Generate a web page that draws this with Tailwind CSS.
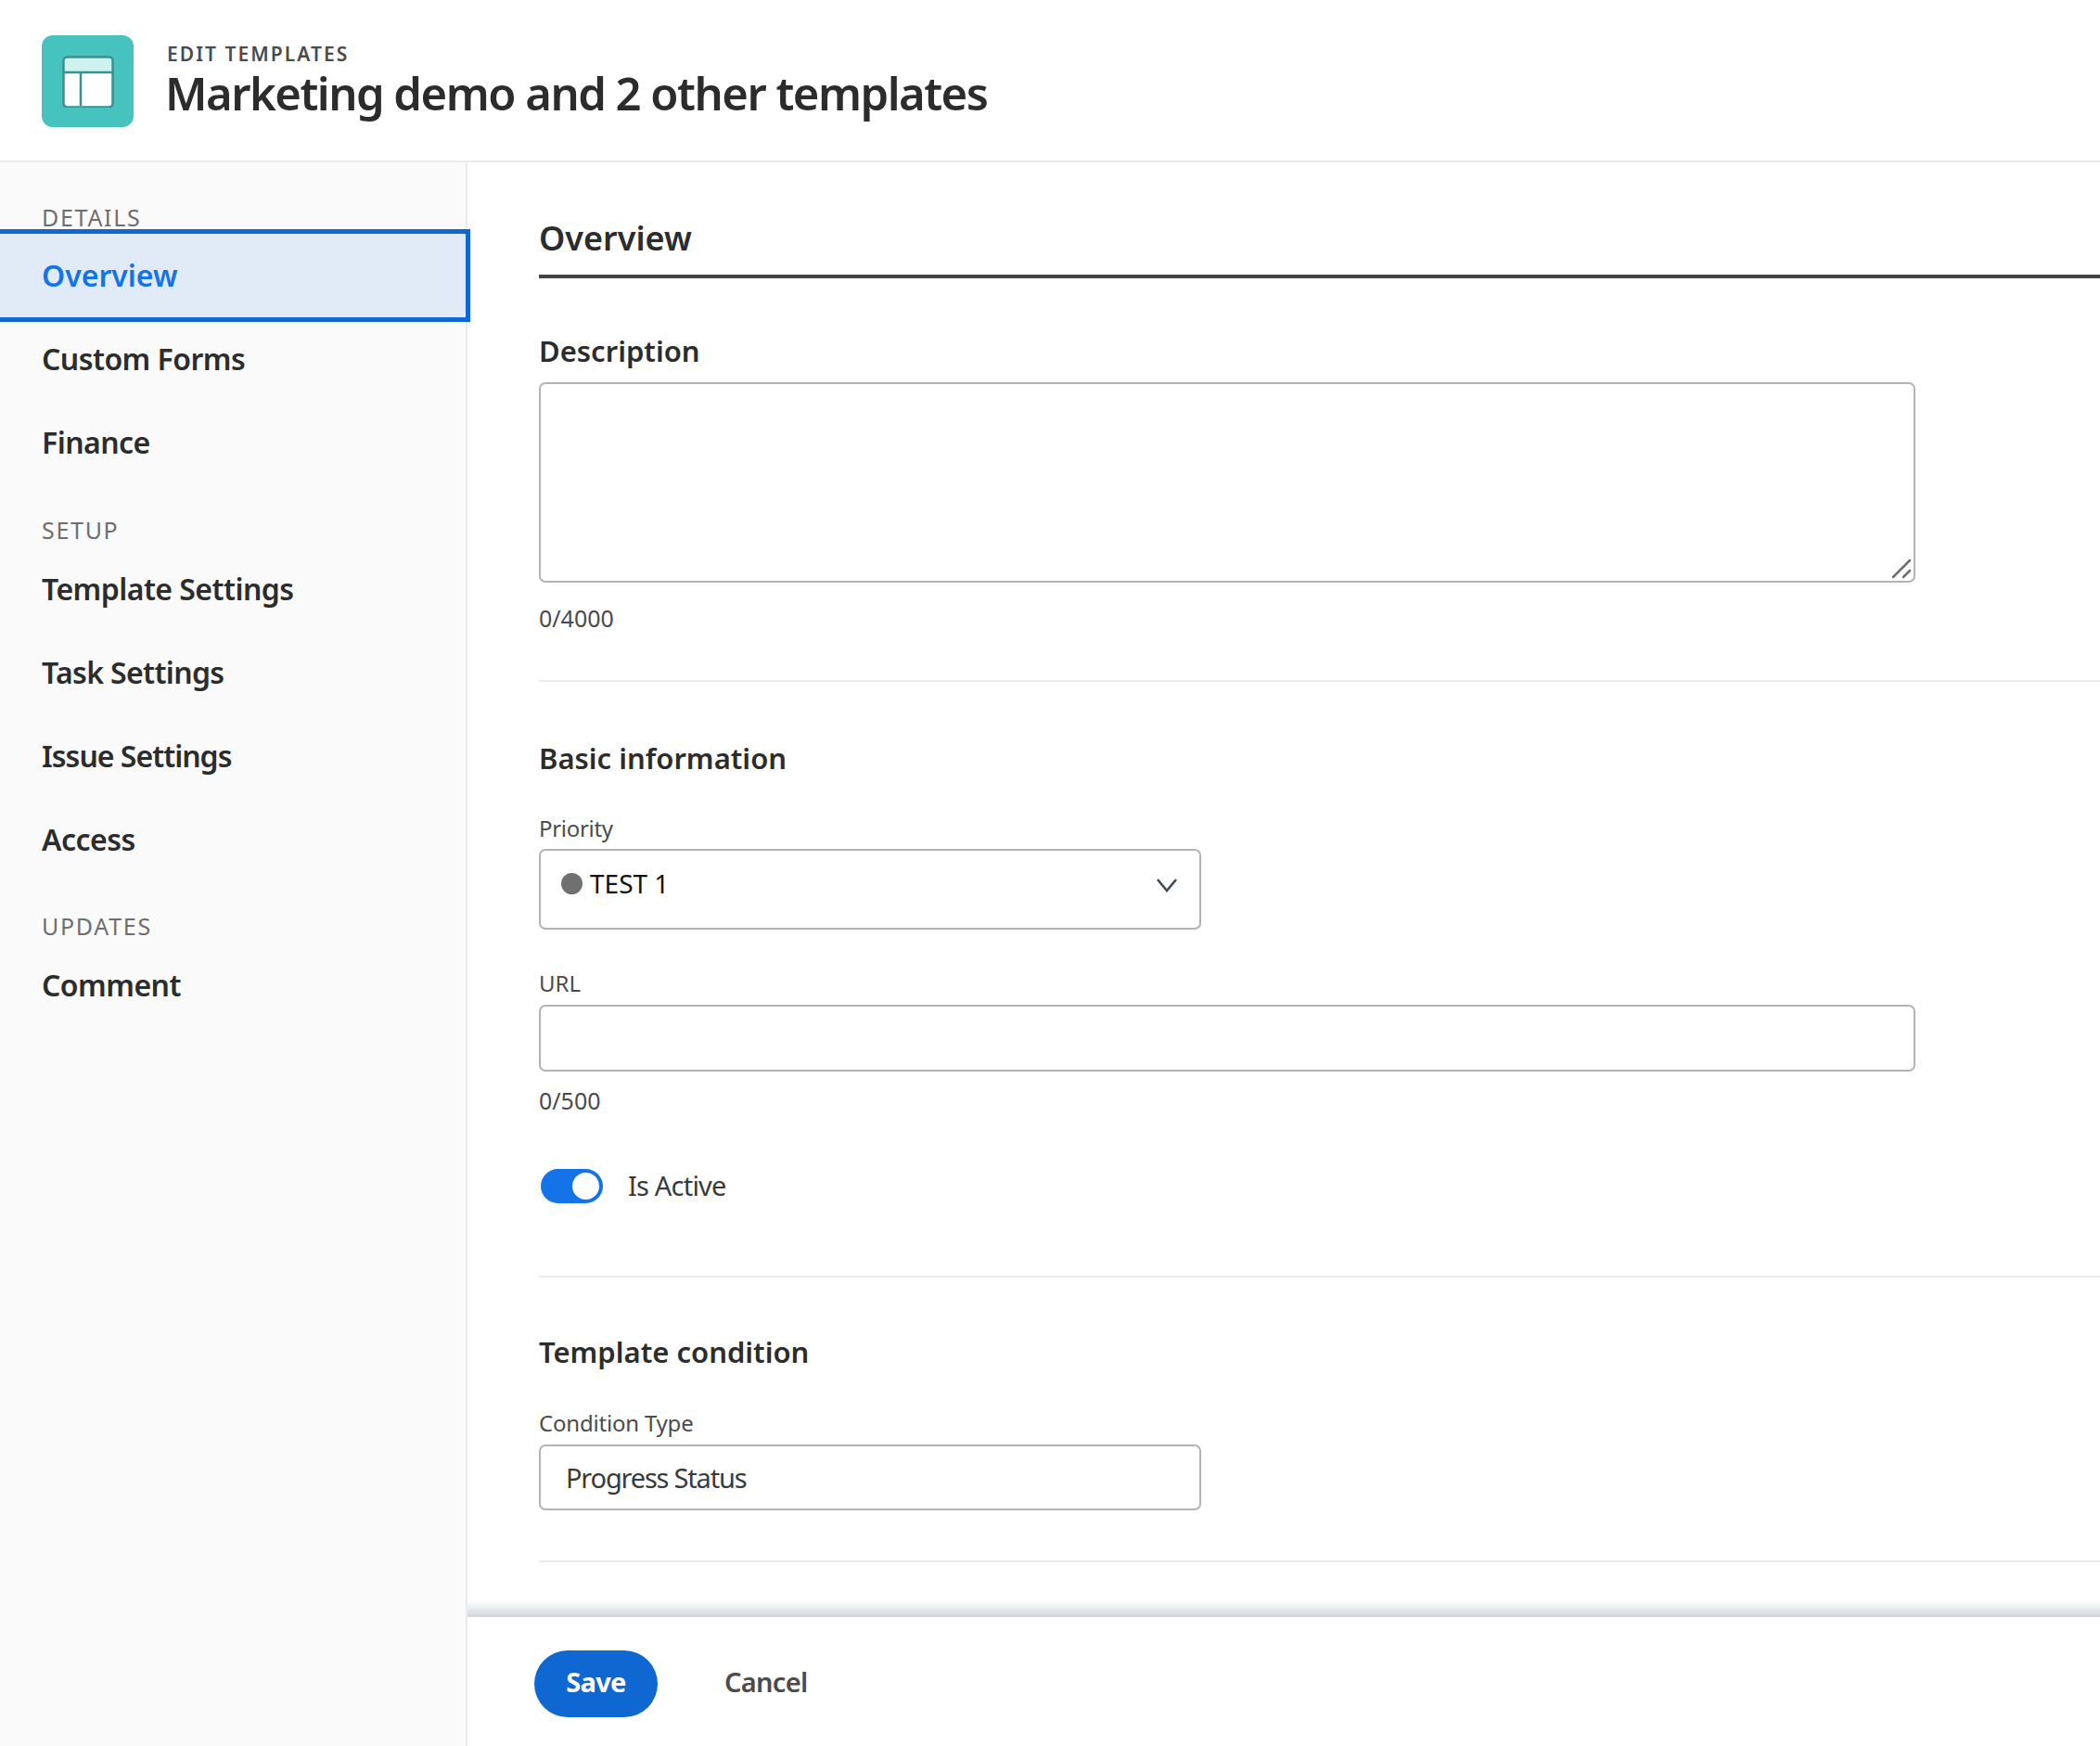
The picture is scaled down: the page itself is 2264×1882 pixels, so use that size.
<!DOCTYPE html>
<html lang="en">
<head>
  <meta charset="UTF-8">
  <meta name="viewport" content="width=device-width, initial-scale=1.0">
  <title>Edit Templates</title>
  <script src="https://cdn.jsdelivr.net/npm/@tailwindcss/browser@4"></script>
</head>
<body class="bg-white h-[1882px] overflow-hidden flex flex-col font-['Noto_Sans',sans-serif] text-[#2c2c2c]">
  <!-- header -->
  <header class="h-[175px] shrink-0 border-b-2 border-[#ebebeb] flex items-start pl-[45px] pt-[38px]">
    <div class="w-[99px] h-[99px] rounded-xl bg-[#46c2bf] flex items-center justify-center">
      <svg width="56" height="56" viewBox="0 0 56 56">
        <rect x="1.5" y="1.5" width="53" height="54" rx="4" fill="#fff" stroke="#3a8f8f" stroke-width="2.5"/>
        <path d="M3 6a3 3 0 0 1 3-3h44a3 3 0 0 1 3 3v11H3z" fill="#cff2ef"/>
        <path d="M2 18h52M20 18v36" stroke="#3a8f8f" stroke-width="2.5" fill="none"/>
      </svg>
    </div>
    <div class="ml-[34px] mt-[7px]">
      <div class="ml-[2px] text-[21px] leading-[26px] font-semibold tracking-[2.05px] text-[#4b4b4b]">EDIT TEMPLATES</div>
      <h1 class="mt-[1px] text-[49px] leading-[56px] font-semibold text-[#2c2c2c] tracking-[-1.5px]">Marketing demo and 2 other templates</h1>
    </div>
  </header>

  <div class="flex flex-1 min-h-0">
    <!-- sidebar -->
    <nav class="w-[504px] shrink-0 bg-[#fafafa] border-r-2 border-[#ebebeb] pt-[46px]">
      <div class="pl-[45px] h-[26px] text-[25px] leading-[26px] tracking-[1.7px] text-[#6e6e6e]">DETAILS</div>
      <a class="w-[507px] h-[100px] flex items-center pl-[45px] border-[5px] border-l-0 border-[#0f67d2] bg-[#e1ebf7] text-[#1473e6] text-[32px] font-semibold relative">Overview</a>
      <a class="h-[90px] flex items-center pl-[45px] text-[32px] tracking-[-0.55px] font-semibold mt-[-5px]">Custom Forms</a>
      <a class="h-[90px] flex items-center pl-[45px] text-[32px] tracking-[-0.55px] font-semibold">Finance</a>
      <div class="pl-[45px] mt-[36px] h-[26px] text-[25px] leading-[26px] tracking-[1.7px] text-[#6e6e6e]">SETUP</div>
      <a class="h-[90px] flex items-center pl-[45px] text-[32px] tracking-[-0.55px] font-semibold mt-[6px]">Template Settings</a>
      <a class="h-[90px] flex items-center pl-[45px] text-[32px] tracking-[-0.65px] font-semibold">Task Settings</a>
      <a class="h-[90px] flex items-center pl-[45px] text-[32px] tracking-[-1px] font-semibold">Issue Settings</a>
      <a class="h-[90px] flex items-center pl-[45px] text-[32px] tracking-[-0.55px] font-semibold">Access</a>
      <div class="pl-[45px] mt-[35px] h-[26px] text-[25px] leading-[26px] tracking-[1.7px] text-[#6e6e6e]">UPDATES</div>
      <a class="h-[90px] flex items-center pl-[45px] text-[32px] tracking-[-0.55px] font-semibold mt-[6px]">Comment</a>
    </nav>

    <!-- main -->
    <main class="flex-1 min-w-0 flex flex-col">
      <div class="flex-1 min-h-0 pl-[77px] overflow-hidden">
        <h2 class="h-[125px] pt-[58px] border-b-4 border-[#444] text-[36px] leading-[48px] font-semibold">Overview</h2>

        <div class="h-[435px] pt-[56px] border-b-2 border-[#ebebeb]">
          <h3 class="text-[31px] leading-[44px] font-semibold">Description</h3>
          <div class="relative mt-[12px] w-[1484px] h-[216px] border-2 border-[#b3b3b3] rounded-[7px]">
            <svg class="absolute right-[1px] bottom-[1px]" width="24" height="24" viewBox="0 0 24 24">
              <path d="M3 21L21 3M14 21l7-7" stroke="#6e6e6e" stroke-width="2.5" stroke-linecap="round" fill="none"/>
            </svg>
          </div>
          <div class="mt-[22px] text-[25px] leading-[32px] text-[#4b4b4b]">0/4000</div>
        </div>

        <div class="h-[642px] pt-[60px] border-b-2 border-[#ebebeb]">
          <h3 class="text-[31px] leading-[44px] font-semibold">Basic information</h3>
          <label class="block mt-[38px] text-[24px] tracking-[-0.3px] leading-[32px] text-[#4b4b4b]">Priority</label>
          <div class="mt-[6px] w-[714px] h-[87px] border-2 border-[#b3b3b3] rounded-[7px] flex items-start justify-between pl-[22px] pr-[23px] pt-[16px]">
            <div class="flex items-center text-[28px] leading-[38px] text-[#111]">
              <span class="w-[23px] h-[23px] rounded-full bg-[#707070] mr-[8px]"></span>TEST 1
            </div>
            <svg class="mt-[13px]" width="24" height="16" viewBox="0 0 24 16"><path d="M2 2l10 12L22 2" stroke="#3f4a55" stroke-width="2.6" fill="none"/></svg>
          </div>
          <label class="block mt-[42px] text-[24px] leading-[32px] text-[#4b4b4b]">URL</label>
          <div class="mt-[7px] w-[1484px] h-[72px] border-2 border-[#b3b3b3] rounded-[7px]"></div>
          <div class="mt-[15px] text-[25px] leading-[32px] text-[#4b4b4b]">0/500</div>
          <div class="mt-[56px] flex items-center">
            <span class="ml-[2px] w-[67px] h-[37px] rounded-full bg-[#1473e6] flex items-center justify-end pr-[4px]">
              <span class="w-[29px] h-[29px] rounded-full bg-white"></span>
            </span>
            <span class="ml-[27px] text-[29px] tracking-[-0.8px] leading-[40px] text-[#3a3a3a]">Is Active</span>
          </div>
        </div>

        <div class="h-[307px] pt-[58px] border-b-2 border-[#ebebeb]">
          <h3 class="text-[31px] leading-[44px] font-semibold">Template condition</h3>
          <label class="block mt-[39px] text-[24px] tracking-[-0.2px] leading-[32px] text-[#4b4b4b]">Condition Type</label>
          <div class="mt-[7px] w-[714px] h-[71px] border-2 border-[#b3b3b3] rounded-[7px] flex items-center pl-[27px] text-[29px] tracking-[-1.2px] text-[#3a3a3a]">Progress Status</div>
        </div>
      </div>

      <footer class="h-[139px] shrink-0 bg-white flex items-center pl-[72px] pt-[4px] relative">
        <div class="absolute left-0 right-0 bottom-full h-[18px] bg-linear-to-t from-[#d3d7dc] to-transparent"></div>
        <button class="w-[133px] h-[72px] pb-[3px] rounded-full bg-[#0f67d2] text-white text-[29px] tracking-[-0.7px] font-bold">Save</button>
        <button class="ml-[72px] mb-[3px] text-[29px] tracking-[-0.7px] font-semibold text-[#4b4b4b]">Cancel</button>
      </footer>
    </main>
  </div>
</body>
</html>
